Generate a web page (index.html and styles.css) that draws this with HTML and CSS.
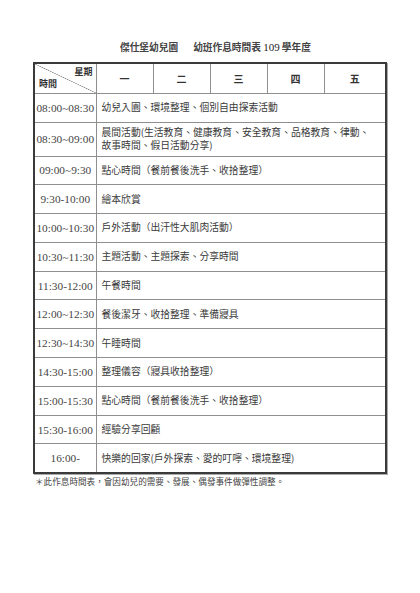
FILE: index.html
```html
<!DOCTYPE html>
<html lang="zh-Hant">
<head>
<meta charset="utf-8">
<title>幼班作息時間表</title>
<link rel="stylesheet" href="styles.css">
</head>
<body>
<div class="page">
  <h1 class="title"><span>傑仕堡幼兒園</span><span class="gap"></span><span>幼班作息時間表 <span class="num">109</span> 學年度</span></h1>
  <table class="schedule">
    <colgroup>
      <col class="c-time"><col class="c-day"><col class="c-day"><col class="c-day"><col class="c-day"><col class="c-last">
    </colgroup>
    <thead>
      <tr class="r-head">
        <th class="corner"><div class="corner-in"><span class="wk">星期</span><span class="tm">時間</span></div></th>
        <th>一</th><th>二</th><th>三</th><th>四</th><th>五</th>
      </tr>
    </thead>
    <tbody>
      <tr><td class="time">08:00~08:30</td><td class="act" colspan="5">幼兒入園、環境整理、個別自由探索活動</td></tr>
      <tr class="r-tall"><td class="time">08:30~09:00</td><td class="act" colspan="5">晨間活動(生活教育、健康教育、安全教育、品格教育、律動、<br>故事時間、假日活動分享)</td></tr>
      <tr><td class="time">09:00~9:30</td><td class="act" colspan="5">點心時間（餐前餐後洗手、收拾整理）</td></tr>
      <tr><td class="time">9:30-10:00</td><td class="act" colspan="5">繪本欣賞</td></tr>
      <tr><td class="time">10:00~10:30</td><td class="act" colspan="5">戶外活動（出汗性大肌肉活動）</td></tr>
      <tr><td class="time">10:30~11:30</td><td class="act" colspan="5">主題活動、主題探索、分享時間</td></tr>
      <tr><td class="time">11:30-12:00</td><td class="act" colspan="5">午餐時間</td></tr>
      <tr><td class="time">12:00~12:30</td><td class="act" colspan="5">餐後潔牙、收拾整理、準備寢具</td></tr>
      <tr><td class="time">12:30~14:30</td><td class="act" colspan="5">午睡時間</td></tr>
      <tr><td class="time">14:30-15:00</td><td class="act" colspan="5">整理儀容（寢具收拾整理）</td></tr>
      <tr><td class="time">15:00-15:30</td><td class="act" colspan="5">點心時間（餐前餐後洗手、收拾整理）</td></tr>
      <tr><td class="time">15:30-16:00</td><td class="act" colspan="5">經驗分享回顧</td></tr>
      <tr><td class="time">16:00-</td><td class="act" colspan="5">快樂的回家(戶外探索、愛的叮嚀、環境整理)</td></tr>
    </tbody>
  </table>
  <p class="note">＊此作息時間表，會因幼兒的需要、發展、偶發事件做彈性調整。</p>
</div>
</body>
</html>
```

FILE: styles.css
```css
html, body {
  margin: 0;
  padding: 0;
  background: #ffffff;
}

.page {
  padding: 41px 0 0 33px;
  color: #3a3a3a;
  font-family: "Noto Sans CJK TC", "Liberation Serif", serif;
}

.title {
  margin: 0 0 8px 87px;
  font-size: 9.7px;
  line-height: 13px;
  font-weight: 700;
  display: flex;
  align-items: center;
  color: #444;
}

.title .gap {
  width: 15px;
}

.title .num {
  font-family: "Liberation Serif", serif;
  font-size: 11px;
  font-weight: 400;
  color: #222;
}

.schedule {
  border-collapse: collapse;
  table-layout: fixed;
  width: 352px;
  border: 2px solid #3a3a3a;
  box-shadow: 1px 1px 0 #aaa;
}

.c-time { width: 62px; }
.c-day { width: 57px; }
.c-last { width: 62px; }

.schedule th,
.schedule td {
  border: 1px solid #8f8f8f;
  padding: 0;
  vertical-align: middle;
}

.r-head { height: 30px; }

.schedule th {
  font-size: 10px;
  font-weight: 700;
  text-align: center;
  color: #333;
}

.corner {
  background: linear-gradient(to top right, transparent calc(50% - 0.6px), #888 50%, transparent calc(50% + 0.6px));
}

.corner-in {
  display: flex;
  flex-direction: column;
  height: 28px;
  padding: 2px 3px 2px 4px;
  box-sizing: border-box;
  font-size: 9px;
  line-height: 12px;
}

.corner-in .wk {
  align-self: flex-end;
}

.corner-in .tm {
  align-self: flex-start;
  margin-top: auto;
}

.schedule tbody tr { height: 28.8px; }
.schedule tbody tr:first-child { height: 29px; }
.schedule tbody tr.r-tall { height: 34px; }

.time {
  font-family: "Liberation Serif", serif;
  font-size: 11.3px;
  text-align: center;
  white-space: nowrap;
  color: #444;
}

.act {
  font-size: 9.8px;
  line-height: 13px;
  padding: 0 0 0 5px !important;
  color: #3a3a3a;
}

.note {
  margin: 2px 0 0 2px;
  font-size: 8.6px;
  line-height: 11px;
  color: #444;
}
```
